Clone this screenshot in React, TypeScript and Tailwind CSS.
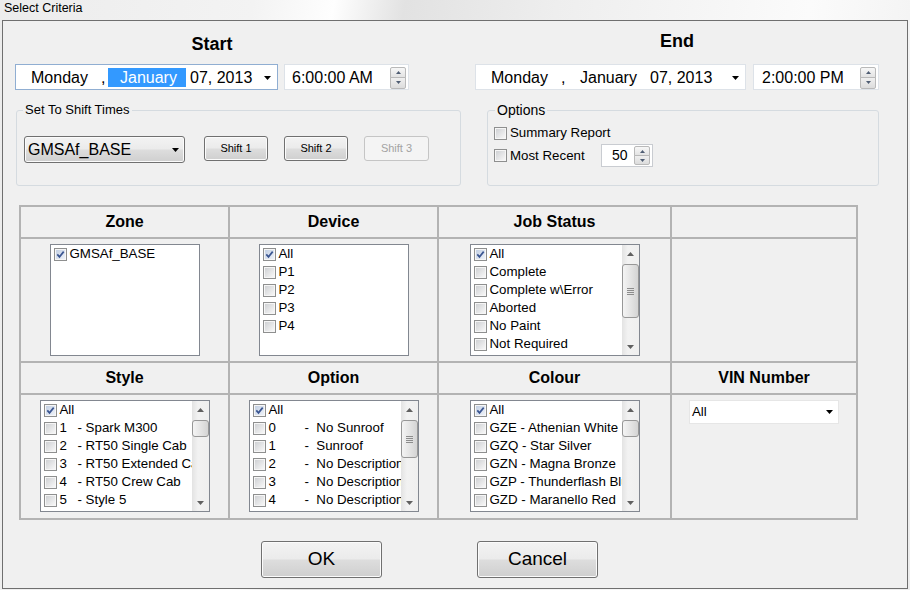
import React from "react";

function Check({ checked = false }: { checked?: boolean }) {
  return (
    <span className="inline-flex w-[13px] h-[13px] shrink-0 border border-[#8e8f8f] bg-[#f6f6f6] p-[1px]">
      <span
        className={
          checked
            ? "flex-1 flex items-center justify-center bg-[linear-gradient(135deg,#c3d0e4,#eef2f8)]"
            : "flex-1 flex items-center justify-center bg-[linear-gradient(135deg,#cfd1d4,#f7f7f7)]"
        }
      >
        {checked && (
          <svg width="9" height="9" viewBox="0 0 9 9">
            <path d="M1.3 4.4 L3.5 6.9 L7.7 1.6" fill="none" stroke="#3a5591" strokeWidth="1.7" />
          </svg>
        )}
      </span>
    </span>
  );
}

function DownTri({ color = "#000" }: { color?: string }) {
  return (
    <svg width="7" height="4" viewBox="0 0 7 4">
      <path d="M0 0 L7 0 L3.5 4Z" fill={color} />
    </svg>
  );
}

function UpTri({ color = "#000" }: { color?: string }) {
  return (
    <svg width="7" height="4" viewBox="0 0 7 4">
      <path d="M0 4 L7 4 L3.5 0Z" fill={color} />
    </svg>
  );
}

function Spinner({ h }: { h: string }) {
  return (
    <div className={`${h} w-[16px] flex flex-col`}>
      <div className="flex-1 flex items-center justify-center border border-[#b9b9b9] rounded-t-[2px] bg-[linear-gradient(180deg,#f7f7f7,#e3e3e3)]">
        <svg width="5" height="3" viewBox="0 0 5 3">
          <path d="M0 3 L5 3 L2.5 0Z" fill="#4f5d73" />
        </svg>
      </div>
      <div className="flex-1 -mt-px flex items-center justify-center border border-[#b9b9b9] rounded-b-[2px] bg-[linear-gradient(180deg,#f0f0f0,#dcdcdc)]">
        <svg width="5" height="3" viewBox="0 0 5 3">
          <path d="M0 0 L5 0 L2.5 3Z" fill="#4f5d73" />
        </svg>
      </div>
    </div>
  );
}

function ScrollBar({ thumb, grip }: { thumb: string; grip?: boolean }) {
  return (
    <div className="w-[17px] h-full shrink-0 flex flex-col bg-[linear-gradient(90deg,#e3e3e3,#f2f2f2_35%,#efefef)]">
      <div className="h-[17px] flex items-center justify-center">
        <UpTri color="#606060" />
      </div>
      <div className="flex-1">
        <div
          className={`${thumb} rounded-[3px] border border-[#979797] bg-[linear-gradient(90deg,#f4f4f4,#e6e6e6_45%,#d4d4d4)] flex flex-col items-center justify-center gap-[1px]`}
        >
          {grip &&
            [0, 1, 2, 3].map((i) => <div key={i} className="w-[7px] h-[1px] bg-[#8c8c8c]" />)}
        </div>
      </div>
      <div className="h-[17px] flex items-center justify-center">
        <DownTri color="#606060" />
      </div>
    </div>
  );
}

type Item = { label: React.ReactNode; checked?: boolean };

function ListBox({
  className,
  items,
  thumb,
  grip,
}: {
  className: string;
  items: Item[];
  thumb?: string;
  grip?: boolean;
}) {
  return (
    <div className={`${className} h-[112px] border border-[#828790] bg-white flex`}>
      <div className="flex-1 min-w-0 overflow-hidden">
        {items.map((it, i) => (
          <div key={i} className="h-[18px] flex items-center pl-[3px] gap-[3px] whitespace-nowrap text-[13.3px]">
            <Check checked={it.checked} />
            <span className="flex whitespace-pre">{it.label}</span>
          </div>
        ))}
      </div>
      {thumb && <ScrollBar thumb={thumb} grip={grip} />}
    </div>
  );
}

function Num({ n, w, rest }: { n: string; w: string; rest: string }) {
  return (
    <>
      <span className={w}>{n}</span>
      <span>{rest}</span>
    </>
  );
}

const btn =
  "rounded-[3px] border border-[#707070] bg-[linear-gradient(180deg,#f3f3f3_0%,#ebebeb_48%,#dddddd_52%,#cfcfcf_100%)] shadow-[inset_0_0_0_1px_#fbfbfb] flex items-center justify-center";

function Header({ children }: { children?: React.ReactNode }) {
  return (
    <div className="bg-[#f0f0f0] flex items-center justify-center text-[16px] font-bold">{children}</div>
  );
}

function Body({ children }: { children?: React.ReactNode }) {
  return <div className="bg-[#f0f0f0] flex justify-center pt-[5px]">{children}</div>;
}

export default function App() {
  return (
    <div className="w-[910px] h-[590px] overflow-hidden font-['Liberation_Sans',Arial,sans-serif] text-black bg-[linear-gradient(100deg,#ececec_0%,#f3f3f3_25%,#fefefe_33%,#e2e2e2_40%,#eeeeee_55%,#fbfbfb_80%,#ededed_100%)]">
      <div className="h-[20px] pl-[4px] text-[12.5px] leading-[17px]">Select Criteria</div>
      <div className="ml-[2px] w-[906px] h-[569px] border border-[#6f6f6f] bg-[#f0f0f0]">
        {/* top row */}
        <div className="flex">
          <div className="ml-[12px] w-[394px] pt-[12px] flex flex-col">
            <div className="h-[22px] leading-[22px] text-[18px] font-bold text-center">Start</div>
            <div className="mt-[9px] flex gap-[6px] text-[16px]">
              <div className="w-[263px] h-[26px] border border-[#90aed2] bg-white flex items-center pl-[15px] pt-[1px]">
                <span className="w-[70px]">Monday</span>
                <span className="w-[7px]">,</span>
                <span className="w-[78px] h-[19px] leading-[19px] bg-[#3399ff] text-white pl-[12px]">January</span>
                <span className="ml-[4px]">07, 2013</span>
                <span className="flex-1" />
                <span className="mr-[6px] flex">
                  <DownTri />
                </span>
              </div>
              <div className="w-[125px] h-[26px] border border-[#dde2e8] bg-white flex items-center pl-[7px] pt-[1px]">
                <span>6:00:00 AM</span>
                <span className="flex-1" />
                <span className="mr-[2px] flex">
                  <Spinner h="h-[22px]" />
                </span>
              </div>
            </div>
          </div>
          <div className="ml-[66px] w-[404px] pt-[9px] flex flex-col">
            <div className="h-[22px] leading-[22px] text-[18px] font-bold text-center">End</div>
            <div className="mt-[12px] flex gap-[7px] text-[16px]">
              <div className="w-[271px] h-[26px] border border-[#dde2e8] bg-white flex items-center pl-[15px] pt-[1px]">
                <span className="w-[70px]">Monday</span>
                <span className="w-[7px]">,</span>
                <span className="w-[78px] h-[19px] leading-[19px] pl-[12px]">January</span>
                <span className="ml-[4px]">07, 2013</span>
                <span className="flex-1" />
                <span className="mr-[6px] flex">
                  <DownTri />
                </span>
              </div>
              <div className="w-[126px] h-[26px] border border-[#dde2e8] bg-white flex items-center pl-[8px] pt-[1px]">
                <span>2:00:00 PM</span>
                <span className="flex-1" />
                <span className="mr-[2px] flex">
                  <Spinner h="h-[22px]" />
                </span>
              </div>
            </div>
          </div>
        </div>

        {/* group boxes */}
        <div className="mt-[20px] flex">
          <div className="ml-[13px] w-[445px] h-[76px] border border-[#d5dbe0] rounded-[3px] relative">
            <span className="absolute -top-[8px] left-[6px] px-[2px] bg-[#f0f0f0] text-[13px] leading-[14px]">
              Set To Shift Times
            </span>
            <div className="flex items-start pl-[7px] pt-[25px]">
              <div className={`${btn} w-[161px] h-[27px] !justify-start pl-[3px] text-[16px]`}>
                <span>GMSAf_BASE</span>
                <span className="flex-1" />
                <span className="mr-[5px] flex">
                  <DownTri />
                </span>
              </div>
              <div className={`${btn} ml-[19px] w-[64px] h-[25px] text-[11px]`}>Shift 1</div>
              <div className={`${btn} ml-[16px] w-[64px] h-[25px] text-[11px]`}>Shift 2</div>
              <div className="ml-[16px] w-[65px] h-[25px] rounded-[3px] border border-[#c5c5c5] bg-[#f4f4f4] text-[#a3a3a3] text-[11px] flex items-center justify-center">
                Shift 3
              </div>
            </div>
          </div>
          <div className="ml-[26px] w-[392px] h-[76px] border border-[#d5dbe0] rounded-[3px] relative">
            <span className="absolute -top-[8px] left-[7px] px-[2px] bg-[#f0f0f0] text-[14px] leading-[14px]">
              Options
            </span>
            <div className="pl-[6px] pt-[13px] flex flex-col gap-[2px] text-[13.3px]">
              <div className="h-[18px] flex items-center gap-[3px]">
                <Check />
                <span>Summary Report</span>
              </div>
              <div className="h-[23px] flex items-center gap-[3px]">
                <Check />
                <span className="w-[88px]">Most Recent</span>
                <div className="w-[52px] h-[23px] border border-[#c9ccd1] bg-white flex items-center pl-[10px] text-[14px]">
                  <span>50</span>
                  <span className="flex-1" />
                  <span className="mr-[2px] flex">
                    <Spinner h="h-[19px]" />
                  </span>
                </div>
              </div>
            </div>
          </div>
        </div>

        {/* grid */}
        <div className="mt-[19px] ml-[16px] w-[839px] grid grid-cols-[207px_207px_231px_184px] grid-rows-[30px_122px_30px_123px] gap-[2px] p-[2px] bg-[#b3b3b3]">
          <Header>Zone</Header>
          <Header>Device</Header>
          <Header>Job Status</Header>
          <Header />
          <Body>
            <ListBox className="w-[150px]" items={[{ label: "GMSAf_BASE", checked: true }]} />
          </Body>
          <Body>
            <ListBox
              className="w-[150px]"
              items={[
                { label: "All", checked: true },
                { label: "P1" },
                { label: "P2" },
                { label: "P3" },
                { label: "P4" },
              ]}
            />
          </Body>
          <Body>
            <ListBox
              className="w-[170px]"
              thumb="mt-[2px] h-[54px]"
              grip
              items={[
                { label: "All", checked: true },
                { label: "Complete" },
                { label: "Complete w\\Error" },
                { label: "Aborted" },
                { label: "No Paint" },
                { label: "Not Required" },
              ]}
            />
          </Body>
          <Body />
          <Header>Style</Header>
          <Header>Option</Header>
          <Header>Colour</Header>
          <Header>VIN Number</Header>
          <Body>
            <ListBox
              className="w-[170px]"
              thumb="mt-[2px] h-[17px]"
              items={[
                { label: "All", checked: true },
                { label: <Num n="1" w="w-[18px]" rest="- Spark M300" /> },
                { label: <Num n="2" w="w-[18px]" rest="- RT50 Single Cab" /> },
                { label: <Num n="3" w="w-[18px]" rest="- RT50 Extended Cab" /> },
                { label: <Num n="4" w="w-[18px]" rest="- RT50 Crew Cab" /> },
                { label: <Num n="5" w="w-[18px]" rest="- Style 5" /> },
              ]}
            />
          </Body>
          <Body>
            <ListBox
              className="w-[170px]"
              thumb="mt-[2px] h-[38px]"
              grip
              items={[
                { label: "All", checked: true },
                { label: <Num n="0" w="w-[36px]" rest="-  No Sunroof" /> },
                { label: <Num n="1" w="w-[36px]" rest="-  Sunroof" /> },
                { label: <Num n="2" w="w-[36px]" rest="-  No Description" /> },
                { label: <Num n="3" w="w-[36px]" rest="-  No Description" /> },
                { label: <Num n="4" w="w-[36px]" rest="-  No Description" /> },
              ]}
            />
          </Body>
          <Body>
            <ListBox
              className="w-[170px]"
              thumb="mt-[2px] h-[17px]"
              items={[
                { label: "All", checked: true },
                { label: "GZE - Athenian White" },
                { label: "GZQ - Star Silver" },
                { label: "GZN - Magna Bronze" },
                { label: "GZP - Thunderflash Blue" },
                { label: "GZD - Maranello Red" },
              ]}
            />
          </Body>
          <Body>
            <div className="w-[150px] h-[24px] border border-[#e6e6e6] bg-white flex items-center pl-[2px] text-[13.3px]">
              <span>All</span>
              <span className="flex-1" />
              <span className="mr-[5px] flex">
                <DownTri />
              </span>
            </div>
          </Body>
        </div>

        {/* buttons */}
        <div className="mt-[21px] flex">
          <div className={`${btn} ml-[258px] w-[121px] h-[37px] text-[19px]`}>OK</div>
          <div className={`${btn} ml-[95px] w-[121px] h-[37px] text-[19px]`}>Cancel</div>
        </div>
      </div>
    </div>
  );
}
